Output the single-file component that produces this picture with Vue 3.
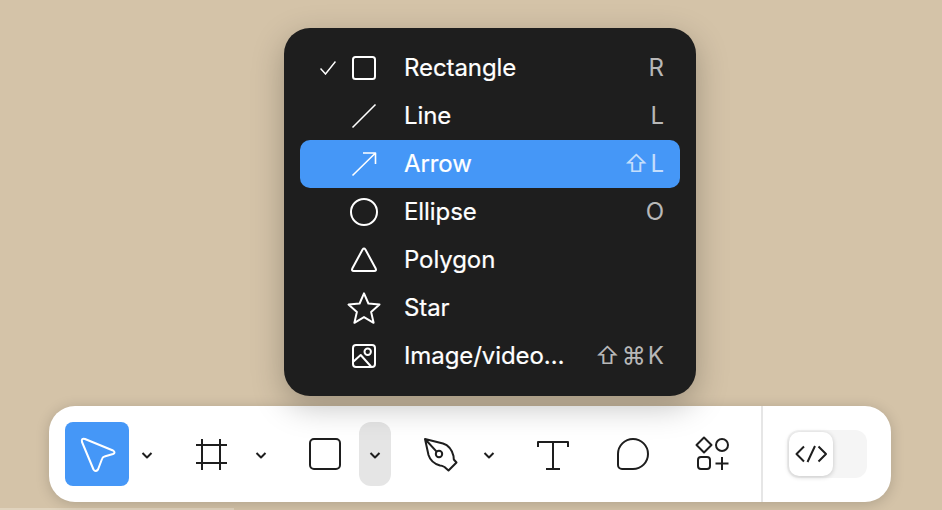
<script setup>
const rows = [
  { label: 'Rectangle', key: 'R', checked: true, icon: 'rect' },
  { label: 'Line', key: 'L', icon: 'line' },
  { label: 'Arrow', key: '⇧L', icon: 'arrow', active: true },
  { label: 'Ellipse', key: 'O', icon: 'ellipse' },
  { label: 'Polygon', key: '', icon: 'polygon' },
  { label: 'Star', key: '', icon: 'star' },
  { label: 'Image/video…', key: '⇧⌘K', icon: 'image' },
]
</script>

<template>
  <div class="page">
    <div class="menu">
      <div v-for="r in rows" :key="r.label" class="row" :class="{ active: r.active }">
        <span class="check">
          <svg v-if="r.checked" width="16" height="14" viewBox="0 0 16 14"><path d="M0.5 7.5 L5.5 13 L15.5 0.5" /></svg>
        </span>
        <svg class="micon" width="48" height="48" viewBox="0 0 48 48">
          <rect v-if="r.icon === 'rect'" x="13" y="13" width="22" height="22" rx="2.5" />
          <path v-if="r.icon === 'line'" class="thin" d="M12.5 35.5 L35.5 12.5" />
          <path v-if="r.icon === 'arrow'" class="thin" d="M12.5 35.5 L35.5 13 M23 13 H35.5 V24" />
          <circle v-if="r.icon === 'ellipse'" cx="24" cy="24" r="13" />
          <path v-if="r.icon === 'polygon'" d="M22.6 13.5 Q24 11.5 25.4 13.5 L35.7 32.5 Q36.7 35 34.2 35 L13.8 35 Q11.3 35 12.3 32.5 Z" />
          <path v-if="r.icon === 'star'" d="M24 9.3 L28.4 19.5 L39.5 20.6 L31.1 27.9 L33.6 38.8 L24 33.1 L14.4 38.8 L16.9 27.9 L8.5 20.6 L19.6 19.5 Z" />
          <template v-if="r.icon === 'image'">
            <rect x="13" y="13" width="22" height="22" rx="3" />
            <circle cx="27.7" cy="19.7" r="3.2" />
            <path d="M13.5 29.5 L20.7 23 L31 34.5" />
          </template>
        </svg>
        <span class="label">{{ r.label }}</span>
        <span class="key">{{ r.key }}</span>
      </div>
    </div>

    <div class="toolbar">
      <div class="tools">
        <div class="group">
          <button class="tool selected">
            <svg width="64" height="64" viewBox="0 0 64 64"><path class="white" d="M20 17 L48 28.5 Q51 30.5 48 32 L39.5 34.5 Q37.5 35 37 37 L33 47.5 Q30.5 50.5 28.5 47.5 L17 20 Q16 16 20 17 Z" /></svg>
          </button>
          <button class="chev">
            <svg width="32" height="64" viewBox="0 0 32 64"><path d="M11.5 31 L16 35.5 L20.5 31" /></svg>
          </button>
        </div>
        <div class="group">
          <button class="tool">
            <svg width="64" height="64" viewBox="0 0 64 64"><path d="M23 17 V48 M41 17 V48 M17 23 H48 M17 41 H48" /></svg>
          </button>
          <button class="chev">
            <svg width="32" height="64" viewBox="0 0 32 64"><path d="M11.5 31 L16 35.5 L20.5 31" /></svg>
          </button>
        </div>
        <div class="group">
          <button class="tool">
            <svg width="64" height="64" viewBox="0 0 64 64"><rect x="17" y="17" width="30" height="30" rx="4" /></svg>
          </button>
          <button class="chev open">
            <svg width="32" height="64" viewBox="0 0 32 64"><path d="M11.5 31 L16 35.5 L20.5 31" /></svg>
          </button>
        </div>
        <div class="group">
          <button class="tool">
            <svg width="64" height="64" viewBox="0 0 64 64"><path d="M18 17 L36 21.5 Q44 24 46.5 34 L46.8 37.5 L49.5 40.5 L41.5 48.5 L37.5 45 Q35 43.5 33 43.5 Q24 41 21.5 33 Z M18 17 L29.6 29.6" /><circle cx="32" cy="32" r="3.2" /></svg>
          </button>
          <button class="chev">
            <svg width="32" height="64" viewBox="0 0 32 64"><path d="M11.5 31 L16 35.5 L20.5 31" /></svg>
          </button>
        </div>
        <button class="tool">
          <svg width="64" height="64" viewBox="0 0 64 64"><path d="M17 25 V20 H47 V25 M32 20 V47 M25 47 H39" /></svg>
        </button>
        <button class="tool">
          <svg width="64" height="64" viewBox="0 0 64 64"><path d="M17 32 a15 15 0 1 1 15 15 H21 a4 4 0 0 1 -4 -4 Z" /></svg>
        </button>
        <button class="tool">
          <svg width="64" height="64" viewBox="0 0 64 64"><path d="M23 15.5 L30.5 23 L23 30.5 L15.5 23 Z" /><circle cx="41" cy="23" r="6" /><rect x="17" y="35" width="12" height="12" rx="3" /><path d="M41 35 V48 M34.5 41.5 H47.5" /></svg>
        </button>
      </div>
      <div class="mode">
        <div class="toggle">
          <div class="knob">
            <svg width="44" height="44" viewBox="0 0 44 44"><path d="M15 14.5 L7.5 22 L15 29.5 M18.5 30 L26 14 M29.5 14.5 L37 22 L29.5 29.5" /></svg>
          </div>
        </div>
      </div>
    </div>
    <div class="strip"></div>
  </div>
</template>

<style>
html, body { margin: 0; background: #d4c3a8; overflow: hidden; }
</style>

<style scoped>
.page {
  width: 942px;
  height: 510px;
  overflow: hidden;
  background: #d4c3a8;
  display: flex;
  flex-direction: column;
  align-items: flex-start;
  font-family: Inter, "Liberation Sans", sans-serif;
}
.menu {
  position: relative;
  z-index: 2;
  width: 412px;
  box-sizing: border-box;
  margin: 28px 0 0 284px;
  padding: 16px;
  background: #1e1e1e;
  border-radius: 26px;
  box-shadow: 0 10px 32px rgba(0, 0, 0, 0.25);
}
.row {
  height: 48px;
  display: flex;
  align-items: center;
  padding: 0 16px 0 12px;
  border-radius: 10px;
  color: #fff;
  font-size: 24px;
  line-height: 48px;
}
.row.active { background: #4597f7; }
.check {
  width: 32px;
  display: flex;
  justify-content: center;
}
.check svg { fill: none; stroke: #fff; stroke-width: 1.5; display: block; }
.micon {
  margin: 0 16px 0 -4px;
  fill: none;
  stroke: #fff;
  stroke-width: 2;
  stroke-linejoin: round;
  flex: none;
}
.micon .thin { stroke-width: 1.6; }
.label { flex: 1; white-space: nowrap; letter-spacing: -0.08px; -webkit-text-stroke: 0.2px #fff; }
.key {
  color: rgba(255, 255, 255, 0.7);
  white-space: nowrap;
  letter-spacing: 2px;
  margin-right: -2px;
}
.toolbar {
  position: relative;
  z-index: 1;
  width: 842px;
  height: 96px;
  margin: 10px 0 0 49px;
  flex: none;
  display: flex;
  background: #fff;
  border-radius: 26px;
  box-shadow: 0 2px 14px rgba(0, 0, 0, 0.18);
}
.tools {
  flex: 1;
  display: flex;
  align-items: center;
  gap: 16px;
  padding: 0 16px;
}
.group { display: flex; gap: 2px; }
button {
  border: 0;
  padding: 0;
  background: none;
  display: block;
}
.tool { width: 64px; height: 64px; border-radius: 8px; }
.tool.selected { background: #4597f7; }
.chev { width: 32px; height: 64px; border-radius: 12px; }
.chev.open { background: #e5e5e5; }
.toolbar svg {
  display: block;
  fill: none;
  stroke: #1e1e1e;
  stroke-width: 2;
  stroke-linejoin: round;
}
.toolbar svg .white { stroke: #fff; }
.mode {
  border-left: 2px solid #e6e6e6;
  padding: 0 24px;
  display: flex;
  align-items: center;
}
.toggle {
  width: 80px;
  height: 48px;
  box-sizing: border-box;
  padding: 2px;
  border-radius: 12px;
  background: #f5f5f5;
}
.knob {
  width: 44px;
  height: 44px;
  background: #fff;
  border-radius: 10px;
  box-shadow: 0 1px 5px rgba(0, 0, 0, 0.2);
}
.strip {
  flex: none;
  width: 234px;
  height: 2px;
  margin-top: 6px;
  background: #e0d3bd;
}
</style>
